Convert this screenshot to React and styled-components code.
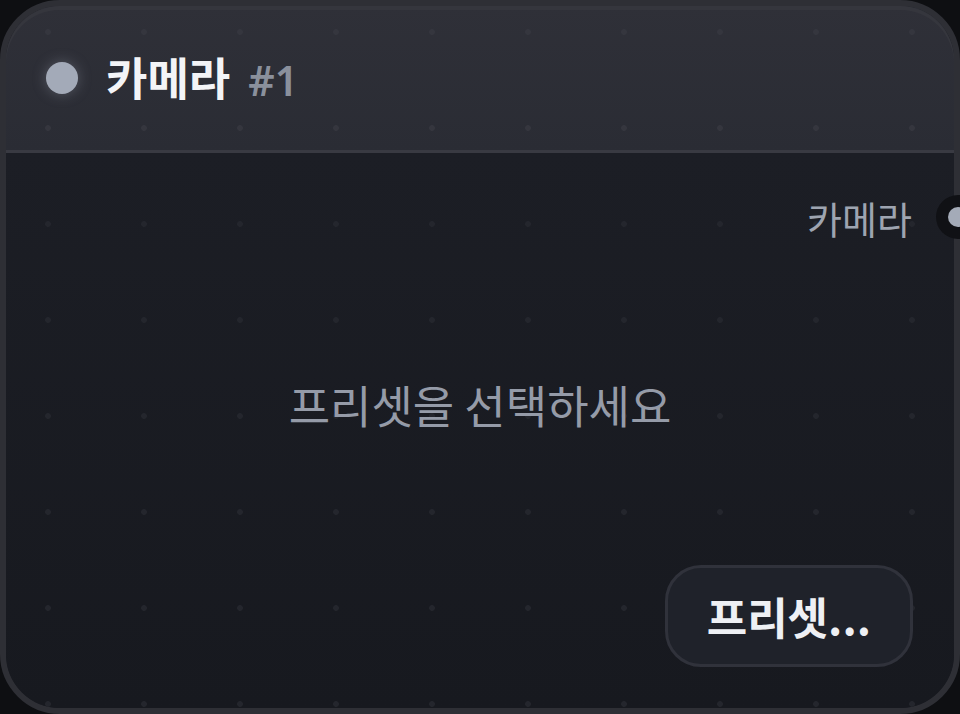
import styled, { createGlobalStyle } from "styled-components";

const GlobalStyle = createGlobalStyle`
  * { box-sizing: border-box; }
  html, body {
    margin: 0;
    padding: 0;
    background: #0e0f12;
    font-family: "Noto Sans CJK KR", "Noto Sans", sans-serif;
  }
`;

// canvas grid dots, pinned to the viewport so header and body line up
const dots = (color) => `
  radial-gradient(circle at 48px 32px, ${color} 0 2.5px, transparent 3.2px)
`;

const Canvas = styled.div`
  width: 960px;
  height: 714px;
  overflow: hidden;
`;

const Node = styled.div`
  position: relative;
  width: 960px;
  height: 714px;
  display: flex;
  flex-direction: column;
  border: 6px solid #2e2f35;
  border-radius: 60px;
  background: #1a1c23;
`;

const Header = styled.div`
  height: 147px;
  display: flex;
  align-items: center;
  padding: 0 40px;
  gap: 28px;
  border-radius: 54px 54px 0 0;
  border-bottom: 3px solid #393a42;
  background-image: ${dots("#35363e")},
    linear-gradient(180deg, #2f3038 0%, #2a2c34 100%);
  background-size: 96px 96px, 100% 100%;
  background-attachment: fixed, scroll;
  box-shadow: inset 0 4px 0 #35363d;
`;

const StatusDot = styled.span`
  width: 32px;
  height: 32px;
  border-radius: 50%;
  background: #a3aab8;
  box-shadow: 0 0 14px rgba(163, 170, 184, 0.35);
  flex-shrink: 0;
`;

const Title = styled.div`
  display: flex;
  align-items: baseline;
  gap: 18px;
  margin-top: -4px;
`;

const Name = styled.span`
  font-size: 45px;
  font-weight: 700;
  color: #f3f4f7;
`;

const Index = styled.span`
  font-family: "Noto Sans", sans-serif;
  font-size: 41px;
  font-weight: 600;
  color: #8a909c;
`;

const Body = styled.div`
  flex: 1;
  display: flex;
  flex-direction: column;
  border-radius: 0 0 54px 54px;
  background-image: ${dots("#24262d")},
    linear-gradient(180deg, #1c1e25 0%, #17191f 100%);
  background-size: 96px 96px, 100% 100%;
  background-attachment: fixed, scroll;
`;

const OutputRow = styled.div`
  position: relative;
  height: 94px;
  padding: 34px 42px 0 0;
  display: flex;
  justify-content: flex-end;
  align-items: center;
`;

const OutputLabel = styled.span`
  height: 60px;
  display: flex;
  align-items: center;
  font-size: 38px;
  color: #9ea4b0;
`;

const Socket = styled.span`
  position: absolute;
  right: -26px;
  top: 42px;
  width: 44px;
  height: 44px;
  border-radius: 50%;
  background: #101115;
  display: flex;
  align-items: center;
  justify-content: center;

  &::after {
    content: "";
    width: 20px;
    height: 20px;
    border-radius: 50%;
    background: #a4abb8;
  }
`;

const Placeholder = styled.div`
  flex: 1;
  display: flex;
  align-items: center;
  justify-content: center;
  padding-bottom: 4px;
  font-size: 45px;
  font-weight: 400;
  color: #959ba8;
`;

const Footer = styled.div`
  display: flex;
  justify-content: flex-end;
  padding: 0 41px 41px 0;
`;

const PresetButton = styled.button`
  height: 102px;
  padding: 0 39px;
  border: 3px solid #30323b;
  border-radius: 36px;
  background: #1f222a;
  color: #eef0f4;
  font-family: inherit;
  font-size: 44px;
  font-weight: 700;
  cursor: pointer;
`;

export default function App() {
  return (
    <Canvas>
      <GlobalStyle />
      <Node>
        <Header>
          <StatusDot />
          <Title>
            <Name>카메라</Name>
            <Index>#1</Index>
          </Title>
        </Header>
        <Body>
          <OutputRow>
            <OutputLabel>카메라</OutputLabel>
            <Socket />
          </OutputRow>
          <Placeholder>프리셋을 선택하세요</Placeholder>
          <Footer>
            <PresetButton>프리셋...</PresetButton>
          </Footer>
        </Body>
      </Node>
    </Canvas>
  );
}
